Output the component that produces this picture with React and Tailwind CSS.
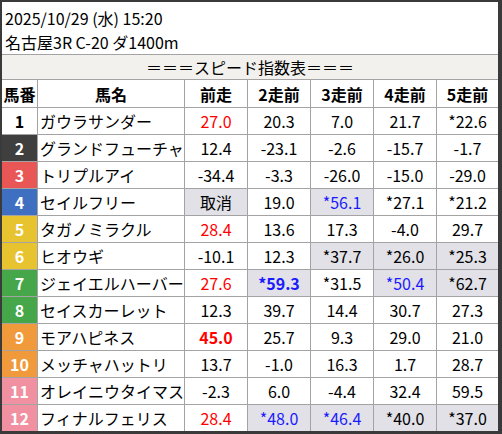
import React from "react";

// 枠番ごとの背景色と文字色
const waku = {
  1: "bg-white text-black",
  2: "bg-[#3f3f3f] text-white",
  3: "bg-[#e85656] text-white",
  4: "bg-[#3f6fc1] text-white",
  5: "bg-[#e7c42f] text-white",
  6: "bg-[#e7c42f] text-white",
  7: "bg-[#46a74a] text-white",
  8: "bg-[#46a74a] text-white",
  9: "bg-[#f09a3b] text-white",
  10: "bg-[#f09a3b] text-white",
  11: "bg-[#f090a0] text-white",
  12: "bg-[#f090a0] text-white",
};

// 各セル: [値, 種類] 種類 r=赤 rb=赤太字 b=青 bb=青太字 g=灰背景
const rows = [
  { no: 1, name: "ガウラサンダー", v: [["27.0", "r"], ["20.3"], ["7.0"], ["21.7"], ["*22.6"]] },
  { no: 2, name: "グランドフューチャ", v: [["12.4"], ["-23.1"], ["-2.6"], ["-15.7"], ["-1.7"]] },
  { no: 3, name: "トリプルアイ", v: [["-34.4"], ["-3.3"], ["-26.0"], ["-15.0"], ["-29.0"]] },
  { no: 4, name: "セイルフリー", v: [["取消", "g"], ["19.0"], ["*56.1", "bg"], ["*27.1"], ["*21.2"]] },
  { no: 5, name: "タガノミラクル", v: [["28.4", "r"], ["13.6"], ["17.3"], ["-4.0"], ["29.7"]] },
  { no: 6, name: "ヒオウギ", v: [["-10.1"], ["12.3"], ["*37.7", "g"], ["*26.0", "g"], ["*25.3", "g"]] },
  { no: 7, name: "ジェイエルハーバー", v: [["27.6", "r"], ["*59.3", "bbg"], ["*31.5"], ["*50.4", "bg"], ["*62.7", "g"]] },
  { no: 8, name: "セイスカーレット", v: [["12.3"], ["39.7"], ["14.4"], ["30.7"], ["27.3"]] },
  { no: 9, name: "モアハピネス", v: [["45.0", "rb"], ["25.7"], ["9.3"], ["29.0"], ["21.0"]] },
  { no: 10, name: "メッチャハットリ", v: [["13.7"], ["-1.0"], ["16.3"], ["1.7"], ["28.7"]] },
  { no: 11, name: "オレイニウタイマス", v: [["-2.3"], ["6.0"], ["-4.4"], ["32.4"], ["59.5"]] },
  { no: 12, name: "フィナルフェリス", v: [["28.4", "r"], ["*48.0", "bg"], ["*46.4", "bg"], ["*40.0", "g"], ["*37.0", "g"]] },
];

const cellClass = (kind = "") => {
  let c = "flex items-center justify-center border-r border-[#a3a3a3]";
  if (kind.includes("g")) c += " bg-[#e1e1e7]";
  if (kind.startsWith("r")) c += " text-[#ff0000]";
  if (kind.startsWith("b")) c += " text-[#1a1aff]";
  if (kind === "rb" || kind.startsWith("bb")) c += " font-bold";
  return c;
};

const grid = "grid grid-cols-[36px_147px_63px_63px_63px_63px_61px]";

export default function App() {
  return (
    <div
      className="w-[502px] h-[434px] bg-white border-t-2 border-l-2 border-r-4 border-b-[3px] border-[#3a3a3a] text-[16px] text-black overflow-hidden"
      style={{ fontFamily: '"Noto Sans CJK JP", "Noto Sans", sans-serif' }}
    >
      {/* レース情報 */}
      <div className="h-[52px] pt-[4px] pl-[3px] leading-[24px]">
        <div>2025/10/29 (水) 15:20</div>
        <div>名古屋3R C-20 ダ1400m</div>
      </div>

      {/* タイトル */}
      <div className="h-[26px] border-t border-b border-[#a3a3a3] bg-[#f2f1ed] flex items-center justify-center">
        ＝＝＝スピード指数表＝＝＝
      </div>

      {/* 見出し */}
      <div className={`${grid} h-[28px] border-b border-[#a3a3a3] font-bold`}>
        <div className="flex items-center justify-center border-r border-[#a3a3a3]">馬番</div>
        <div className="flex items-center justify-center border-r border-[#a3a3a3]">馬名</div>
        <div className="flex items-center justify-center border-r border-[#a3a3a3]">前走</div>
        <div className="flex items-center justify-center border-r border-[#a3a3a3]">2走前</div>
        <div className="flex items-center justify-center border-r border-[#a3a3a3]">3走前</div>
        <div className="flex items-center justify-center border-r border-[#a3a3a3]">4走前</div>
        <div className="flex items-center justify-center">5走前</div>
      </div>

      {/* 各馬 */}
      {rows.map((row, i) => (
        <div
          key={row.no}
          className={`${grid} ${i < rows.length - 1 ? "h-[27px] border-b border-[#a3a3a3]" : "h-[26px]"}`}
        >
          <div className={`flex items-center justify-center font-bold border-r border-[#a3a3a3] ${waku[row.no]}`}>
            {row.no}
          </div>
          <div className="flex items-center pl-[2px] border-r border-[#a3a3a3] whitespace-nowrap overflow-hidden">
            {row.name}
          </div>
          {row.v.map(([val, kind], j) => (
            <div key={j} className={cellClass(kind) + (j === 4 ? " border-r-0" : "")}>
              {val}
            </div>
          ))}
        </div>
      ))}
    </div>
  );
}
